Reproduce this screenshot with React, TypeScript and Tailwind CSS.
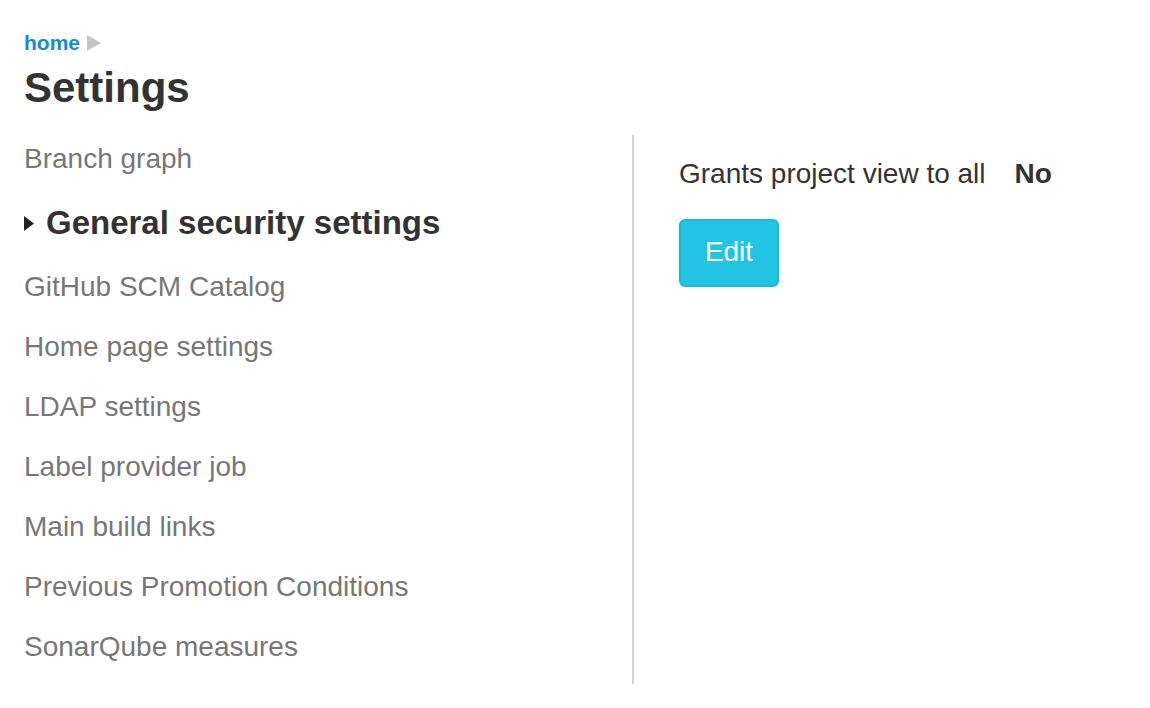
import { useState } from "react";

const items = [
  "Branch graph",
  "General security settings",
  "GitHub SCM Catalog",
  "Home page settings",
  "LDAP settings",
  "Label provider job",
  "Main build links",
  "Previous Promotion Conditions",
  "SonarQube measures",
];

export default function App() {
  const [selected, setSelected] = useState("General security settings");

  return (
    <main
      className="min-h-screen bg-white text-[#333] pl-6 pt-[28px]"
      style={{ fontFamily: '"Liberation Sans", Arial, sans-serif' }}
    >
      <div className="flex items-center gap-[6px] h-[28px]">
        <a href="#" className="text-[21px] font-bold text-[#1a88d3] leading-none">
          home
        </a>
        <svg width="16" height="18" viewBox="0 0 16 18" className="mt-[1px]">
          <polygon points="1,1 15,9 1,17" fill="#c4c4c4" />
        </svg>
      </div>
      <h1 className="mt-[3px] text-[42px] font-bold leading-[58px] text-[#333]">Settings</h1>

      <div className="flex mt-[18px]">
        <ul className="w-[608px] -mt-[6px]">
          {items.map((item) => {
            const active = item === selected;
            return (
              <li
                key={item}
                onClick={() => setSelected(item)}
                className={`flex items-center cursor-pointer ${active ? "h-[68px]" : "h-[60px]"}`}
              >
                {active ? (
                  <span className="flex items-center text-[33px] font-bold text-[#333]">
                    <svg width="11" height="15" viewBox="0 0 11 15" className="shrink-0 mr-[11px] mt-[1px]">
                      <polygon points="0,0 10,7.5 0,15" fill="#222" />
                    </svg>
                    {item}
                  </span>
                ) : (
                  <span className="text-[28px] text-[#777]">{item}</span>
                )}
              </li>
            );
          })}
        </ul>

        <div className="w-[2px] h-[549px] bg-[#d4d4d4]" />

        <div className="pl-[45px] pt-[19px]">
          <div className="flex items-center h-[40px] text-[28px] text-[#333]">
            <span>Grants project view to all</span>
            <span className="ml-[29px] font-bold">No</span>
          </div>
          <button className="mt-[25px] w-[100px] h-[68px] rounded-[6px] border-2 border-[#1bb8d9] bg-[#22c3e3] text-white text-[28px] pb-[2px]">
            Edit
          </button>
        </div>
      </div>
    </main>
  );
}
